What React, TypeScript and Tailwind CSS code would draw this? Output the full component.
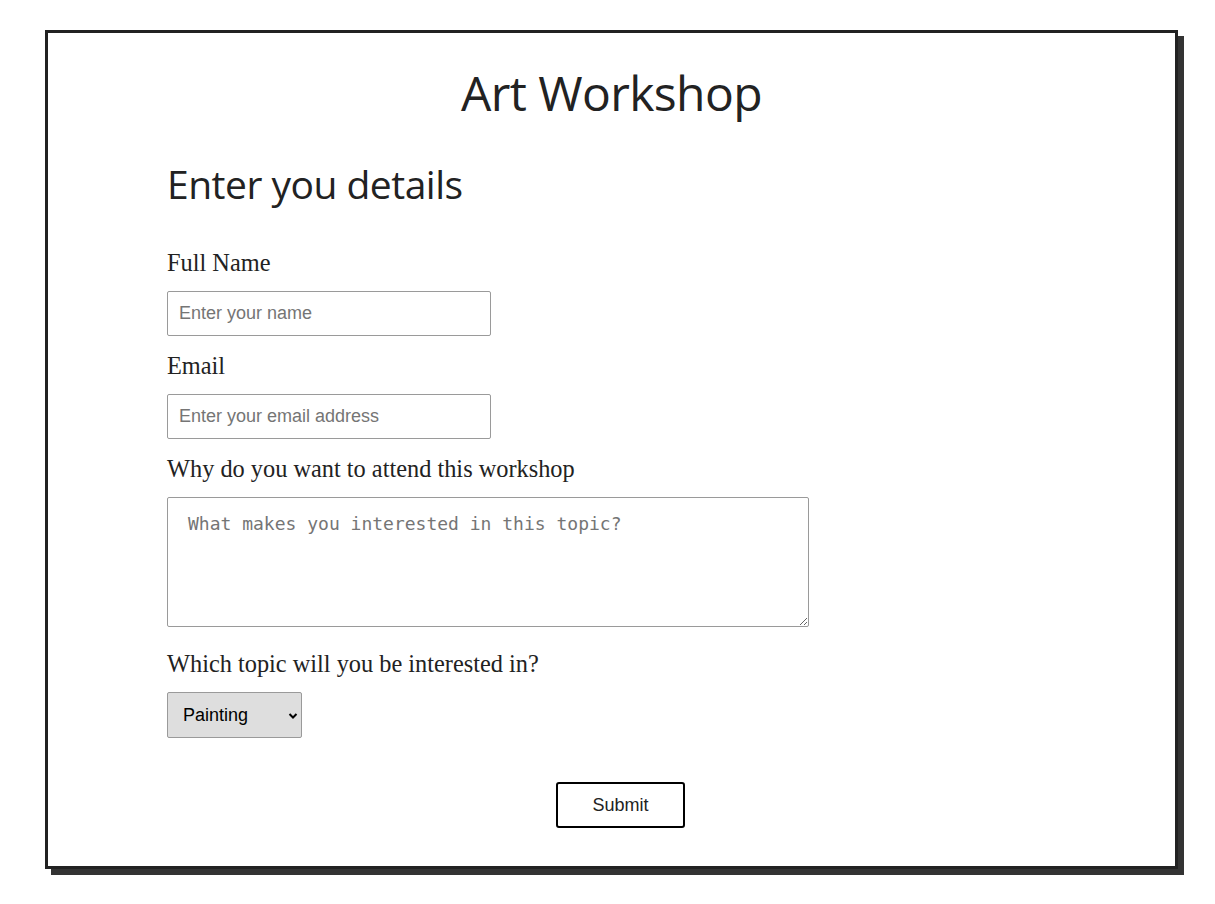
import React from "react";

export default function App() {
  return (
    <div className="min-h-[904px] w-[1215px] bg-white pt-[30px] pl-[45px]">
      <div className="w-[1133px] h-[839px] border-[3px] border-[#222] bg-white shadow-[6px_6px_0_#333] flex flex-col">
        <h1 className="text-center text-[48px] leading-[60px] mt-[30px] text-[#222] font-['Open_Sans',sans-serif] font-normal tracking-[-0.6px]">
          Art Workshop
        </h1>
        <div className="pl-[119px] flex flex-col items-start">
          <h2 className="text-[39px] leading-[50px] mt-[36px] text-[#222] font-['Open_Sans',sans-serif] font-normal tracking-[-0.5px]">
            Enter you details
          </h2>
          <label className="mt-[40px] text-[24.35px] leading-[28px] text-[#222] font-['Liberation_Serif',serif]">
            Full Name
          </label>
          <input
            type="text"
            placeholder="Enter your name"
            className="mt-[14px] w-[324px] h-[45px] border border-[#9a9a9a] rounded-[2px] px-[11px] text-[18px] font-['Liberation_Sans',sans-serif] placeholder:text-[#757575] outline-none"
          />
          <label className="mt-[16px] text-[24.35px] leading-[28px] text-[#222] font-['Liberation_Serif',serif]">
            Email
          </label>
          <input
            type="email"
            placeholder="Enter your email address"
            className="mt-[14px] w-[324px] h-[45px] border border-[#9a9a9a] rounded-[2px] px-[11px] text-[18px] font-['Liberation_Sans',sans-serif] placeholder:text-[#757575] outline-none"
          />
          <label className="mt-[16px] text-[24.35px] leading-[28px] text-[#222] font-['Liberation_Serif',serif]">
            Why do you want to attend this workshop
          </label>
          <textarea
            placeholder="What makes you interested in this topic?"
            className="mt-[14px] w-[642px] h-[130px] border border-[#9a9a9a] rounded-[2px] px-[20px] py-[15px] text-[18px] leading-[22px] font-['DejaVu_Sans_Mono',monospace] placeholder:text-[#757575] outline-none block"
          />
          <label className="mt-[23px] text-[24.35px] leading-[28px] text-[#222] font-['Liberation_Serif',serif]">
            Which topic will you be interested in?
          </label>
          <div className="mt-[14px] relative w-[135px] h-[46px] bg-[#dedede] border border-[#9a9a9a] rounded-[2px] flex items-center pl-[15px]">
            <span className="text-[18px] text-black font-['Liberation_Sans',sans-serif]">Painting</span>
            <svg className="absolute right-[3px] top-[19px]" width="10" height="8" viewBox="0 0 10 8">
              <path d="M1.5 2 L5 5.5 L8.5 2" fill="none" stroke="#000" strokeWidth="2" />
            </svg>
          </div>
        </div>
        <div className="flex justify-center mt-[44px] pl-[18px]">
          <button className="w-[129px] h-[46px] border-2 border-black rounded-[3px] bg-white text-[18px] text-[#222] font-['Liberation_Sans',sans-serif]">
            Submit
          </button>
        </div>
      </div>
    </div>
  );
}
